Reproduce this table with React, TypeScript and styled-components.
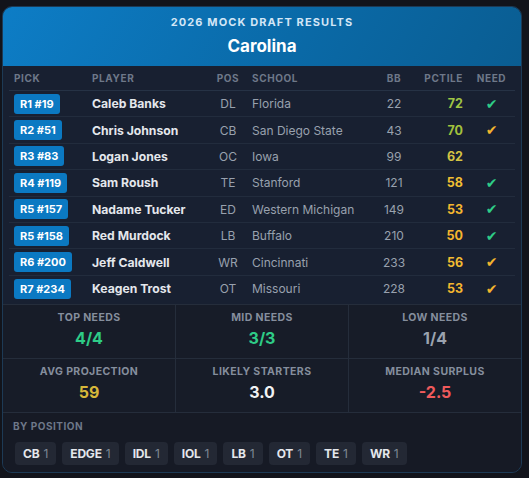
import React from "react";
import styled, { createGlobalStyle } from "styled-components";

const Global = createGlobalStyle`
  html, body { margin: 0; padding: 0; background: #12141b; }
  body { font-family: Inter, "Noto Sans", sans-serif; -webkit-font-smoothing: antialiased; }
`;

const Page = styled.div`
  padding: 6px 7px 6px 2px;
`;

const Card = styled.div`
  width: 520px;
  box-sizing: border-box;
  border: 1px solid #1d3a55;
  border-radius: 10px;
  overflow: hidden;
  background: #182031;
`;

const Header = styled.div`
  height: 59px;
  background: linear-gradient(120deg, #0d7dc6 0%, #0a6aa8 55%, #0a5d92 100%);
  display: flex;
  flex-direction: column;
  align-items: center;
  padding-top: 9px;
  box-sizing: border-box;
`;

const Kicker = styled.div`
  font-size: 11px;
  font-weight: 700;
  letter-spacing: 1.1px;
  color: #d3e6f6;
  line-height: 13px;
`;

const Team = styled.div`
  font-size: 17px;
  font-weight: 700;
  color: #ffffff;
  line-height: 20px;
  margin-top: 7px;
`;

const Table = styled.div`
  padding: 0 6px 2px 6px;
`;

const cols = "78px 125px 32px 126px 48px 50px 47px";

const HeadRow = styled.div`
  display: grid;
  grid-template-columns: ${cols};
  height: 25px;
  box-sizing: border-box;
  align-items: center;
  border-bottom: 1px solid #263245;
`;

const Row = styled.div<{ $last?: boolean }>`
  display: grid;
  grid-template-columns: ${cols};
  height: 26.4px;
  box-sizing: border-box;
  align-items: center;
  border-bottom: ${(p) => (p.$last ? "none" : "1px solid #222c3d")};
`;

type Align = "left" | "center" | "right";

const HeadCell = styled.div<{ $align: Align; $pl?: number; $pr?: number }>`
  font-size: 10px;
  font-weight: 700;
  letter-spacing: 0.6px;
  color: #6e7889;
  text-align: ${(p) => p.$align};
  padding-left: ${(p) => p.$pl ?? 0}px;
  padding-right: ${(p) => p.$pr ?? 0}px;
`;

const Cell = styled.div<{ $align: Align; $pl?: number; $pr?: number }>`
  font-size: 12px;
  color: #98a1ae;
  padding-left: ${(p) => p.$pl ?? 0}px;
  padding-right: ${(p) => p.$pr ?? 0}px;
  white-space: nowrap;
  display: flex;
  align-items: center;
  justify-content: ${(p) => (p.$align === "left" ? "flex-start" : p.$align === "right" ? "flex-end" : "center")};
`;

const Badge = styled.span`
  display: inline-flex;
  align-items: center;
  height: 20px;
  padding: 0 6px;
  border-radius: 3px;
  background: #0b79c2;
  color: #ffffff;
  font-size: 11px;
  font-weight: 700;
`;

const Player = styled(Cell)`
  color: #e4e7ec;
  font-weight: 700;
  font-size: 12.2px;
`;

const Pct = styled(Cell)<{ $color: string }>`
  color: ${(p) => p.$color};
  font-weight: 700;
  font-size: 12.5px;
`;

const Check = styled.span<{ $color: string }>`
  font-family: "DejaVu Sans", sans-serif;
  font-size: 14px;
  line-height: 14px;
  color: ${(p) => p.$color};
`;

const StatsGrid = styled.div`
  display: grid;
  grid-template-columns: repeat(3, 1fr);
  gap: 1px;
  background: #252d3b;
  border-top: 1px solid #252d3b;
  border-bottom: 1px solid #252d3b;
`;

const Stat = styled.div`
  background: #171c28;
  height: 53px;
  display: flex;
  flex-direction: column;
  align-items: center;
  padding-top: 6px;
  box-sizing: border-box;
`;

const StatLabel = styled.div`
  font-size: 10.5px;
  font-weight: 700;
  letter-spacing: 0.4px;
  color: #858e9d;
  line-height: 13px;
`;

const StatValue = styled.div<{ $color: string }>`
  font-size: 16px;
  font-weight: 700;
  color: ${(p) => p.$color};
  line-height: 20px;
  margin-top: 4px;
`;

const Positions = styled.div`
  background: #161a25;
  padding: 7px 10px 7px 10px;
`;

const SectionLabel = styled.div`
  font-size: 10px;
  font-weight: 700;
  letter-spacing: 0.5px;
  color: #6e7889;
  line-height: 12px;
`;

const Chips = styled.div`
  display: flex;
  gap: 6px;
  margin-top: 10px;
  padding-left: 2px;
`;

const Chip = styled.div`
  display: flex;
  align-items: center;
  gap: 4px;
  height: 23px;
  padding: 0 8px;
  border-radius: 4px;
  background: #232834;
  font-size: 12px;
`;

const ChipPos = styled.span`
  font-weight: 700;
  color: #e4e7ec;
  letter-spacing: -0.2px;
`;

const ChipCount = styled.span`
  color: #7f8896;
`;

const GREEN = "#2ecc87";
const AMBER = "#f2b42e";

const picks = [
  { pick: "R1 #19", name: "Caleb Banks", pos: "DL", school: "Florida", bb: 22, pct: 72, pc: "#9fc544", need: GREEN },
  { pick: "R2 #51", name: "Chris Johnson", pos: "CB", school: "San Diego State", bb: 43, pct: 70, pc: "#a3c23c", need: AMBER },
  { pick: "R3 #83", name: "Logan Jones", pos: "OC", school: "Iowa", bb: 99, pct: 62, pc: "#d4c443", need: "" },
  { pick: "R4 #119", name: "Sam Roush", pos: "TE", school: "Stanford", bb: 121, pct: 58, pc: "#f0bf33", need: GREEN },
  { pick: "R5 #157", name: "Nadame Tucker", pos: "ED", school: "Western Michigan", bb: 149, pct: 53, pc: "#f4b72f", need: GREEN },
  { pick: "R5 #158", name: "Red Murdock", pos: "LB", school: "Buffalo", bb: 210, pct: 50, pc: "#f4b52e", need: GREEN },
  { pick: "R6 #200", name: "Jeff Caldwell", pos: "WR", school: "Cincinnati", bb: 233, pct: 56, pc: "#f2bc32", need: AMBER },
  { pick: "R7 #234", name: "Keagen Trost", pos: "OT", school: "Missouri", bb: 228, pct: 53, pc: "#f4b72f", need: AMBER },
];

const stats = [
  { label: "TOP NEEDS", value: "4/4", color: GREEN },
  { label: "MID NEEDS", value: "3/3", color: GREEN },
  { label: "LOW NEEDS", value: "1/4", color: "#9ba3af" },
  { label: "AVG PROJECTION", value: "59", color: "#d6b73a" },
  { label: "LIKELY STARTERS", value: "3.0", color: "#f1f2f4" },
  { label: "MEDIAN SURPLUS", value: "-2.5", color: "#f05a5c" },
];

const positions = ["CB", "EDGE", "IDL", "IOL", "LB", "OT", "TE", "WR"];

export default function App() {
  return (
    <Page>
      <Global />
      <Card>
        <Header>
          <Kicker>2026 MOCK DRAFT RESULTS</Kicker>
          <Team>Carolina</Team>
        </Header>
        <Table>
          <HeadRow>
            <HeadCell $align="left" $pl={5}>PICK</HeadCell>
            <HeadCell $align="left" $pl={5}>PLAYER</HeadCell>
            <HeadCell $align="center">POS</HeadCell>
            <HeadCell $align="left" $pl={8}>SCHOOL</HeadCell>
            <HeadCell $align="center">BB</HeadCell>
            <HeadCell $align="right" $pr={5}>PCTILE</HeadCell>
            <HeadCell $align="center">NEED</HeadCell>
          </HeadRow>
          {picks.map((p, i) => (
            <Row key={p.pick} $last={i === picks.length - 1}>
              <Cell $align="left" $pl={5}>
                <Badge>{p.pick}</Badge>
              </Cell>
              <Player $align="left" $pl={5}>{p.name}</Player>
              <Cell $align="center">{p.pos}</Cell>
              <Cell $align="left" $pl={8}>{p.school}</Cell>
              <Cell $align="center">{p.bb}</Cell>
              <Pct $align="right" $pr={5} $color={p.pc}>{p.pct}</Pct>
              <Cell $align="center">{p.need ? <Check $color={p.need}>✔</Check> : null}</Cell>
            </Row>
          ))}
        </Table>
        <StatsGrid>
          {stats.map((s) => (
            <Stat key={s.label}>
              <StatLabel>{s.label}</StatLabel>
              <StatValue $color={s.color}>{s.value}</StatValue>
            </Stat>
          ))}
        </StatsGrid>
        <Positions>
          <SectionLabel>BY POSITION</SectionLabel>
          <Chips>
            {positions.map((pos) => (
              <Chip key={pos}>
                <ChipPos>{pos}</ChipPos>
                <ChipCount>1</ChipCount>
              </Chip>
            ))}
          </Chips>
        </Positions>
      </Card>
    </Page>
  );
}
